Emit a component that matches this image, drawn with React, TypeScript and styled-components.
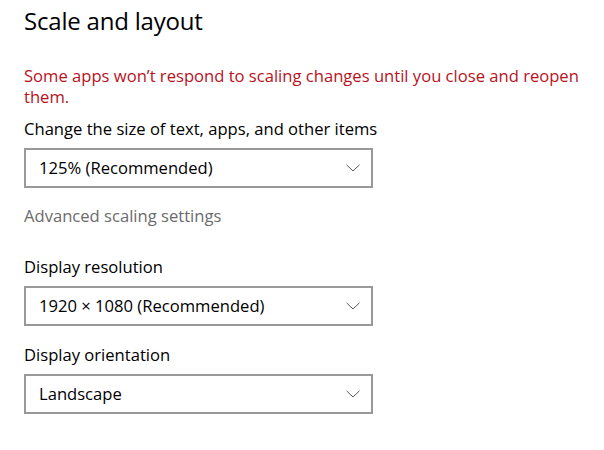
import { FC } from 'react';
import styled, { createGlobalStyle } from 'styled-components';

const GlobalStyle = createGlobalStyle`
  html, body {
    margin: 0;
    padding: 0;
    background: #ffffff;
  }
  body {
    font-family: "Open Sans", "Noto Sans", sans-serif;
    color: #000000;
  }
`;

const Chevron: FC = () => (
  <svg width="14" height="8" viewBox="0 0 14 8" fill="none">
    <path d="M0.5 0.8 L7 7 L13.5 0.8" stroke="#5a5a5a" strokeWidth="1" />
  </svg>
);

type SelectProps = { value: string };

const Select: FC<SelectProps> = ({ value }) => (
  <SelectBox>
    <SelectValue>{value}</SelectValue>
    <Chevron />
  </SelectBox>
);

const App: FC = () => {
  return (
    <Page>
      <GlobalStyle />
      <Title>Scale and layout</Title>
      <Warning>
        Some apps won’t respond to scaling changes until you close and reopen them.
      </Warning>
      <Label>Change the size of text, apps, and other items</Label>
      <Select value="125% (Recommended)" />
      <Link>Advanced scaling settings</Link>
      <Label $top={29}>Display resolution</Label>
      <Select value="1920 × 1080 (Recommended)" />
      <Label $top={18}>Display orientation</Label>
      <Select value="Landscape" />
    </Page>
  );
};

export default App;

const Page = styled.div`
  width: 604px;
  height: 450px;
  box-sizing: border-box;
  padding: 4px 0 0 24px;
  display: flex;
  flex-direction: column;
  align-items: flex-start;
`;

const Title = styled.h1`
  margin: 0;
  font-size: 24px;
  font-weight: 400;
  line-height: 34px;
  letter-spacing: -0.2px;
`;

const Warning = styled.p`
  margin: 27px 0 0;
  width: 575px;
  font-size: 16.6px;
  line-height: 21px;
  color: #b8121d;
`;

const Label = styled.div<{ $top?: number }>`
  margin-top: ${({ $top }) => $top ?? 11}px;
  font-size: 16.6px;
  line-height: 22px;
`;

const SelectBox = styled.div`
  margin-top: 8px;
  width: 349px;
  height: 40px;
  box-sizing: border-box;
  border: 2px solid #999999;
  display: flex;
  align-items: center;
  justify-content: space-between;
  padding: 0 11px 0 13px;
`;

const SelectValue = styled.span`
  font-size: 16.6px;
  line-height: 22px;
`;

const Link = styled.div`
  margin-top: 17px;
  font-size: 16.6px;
  line-height: 22px;
  color: #6b6b6b;
`;
